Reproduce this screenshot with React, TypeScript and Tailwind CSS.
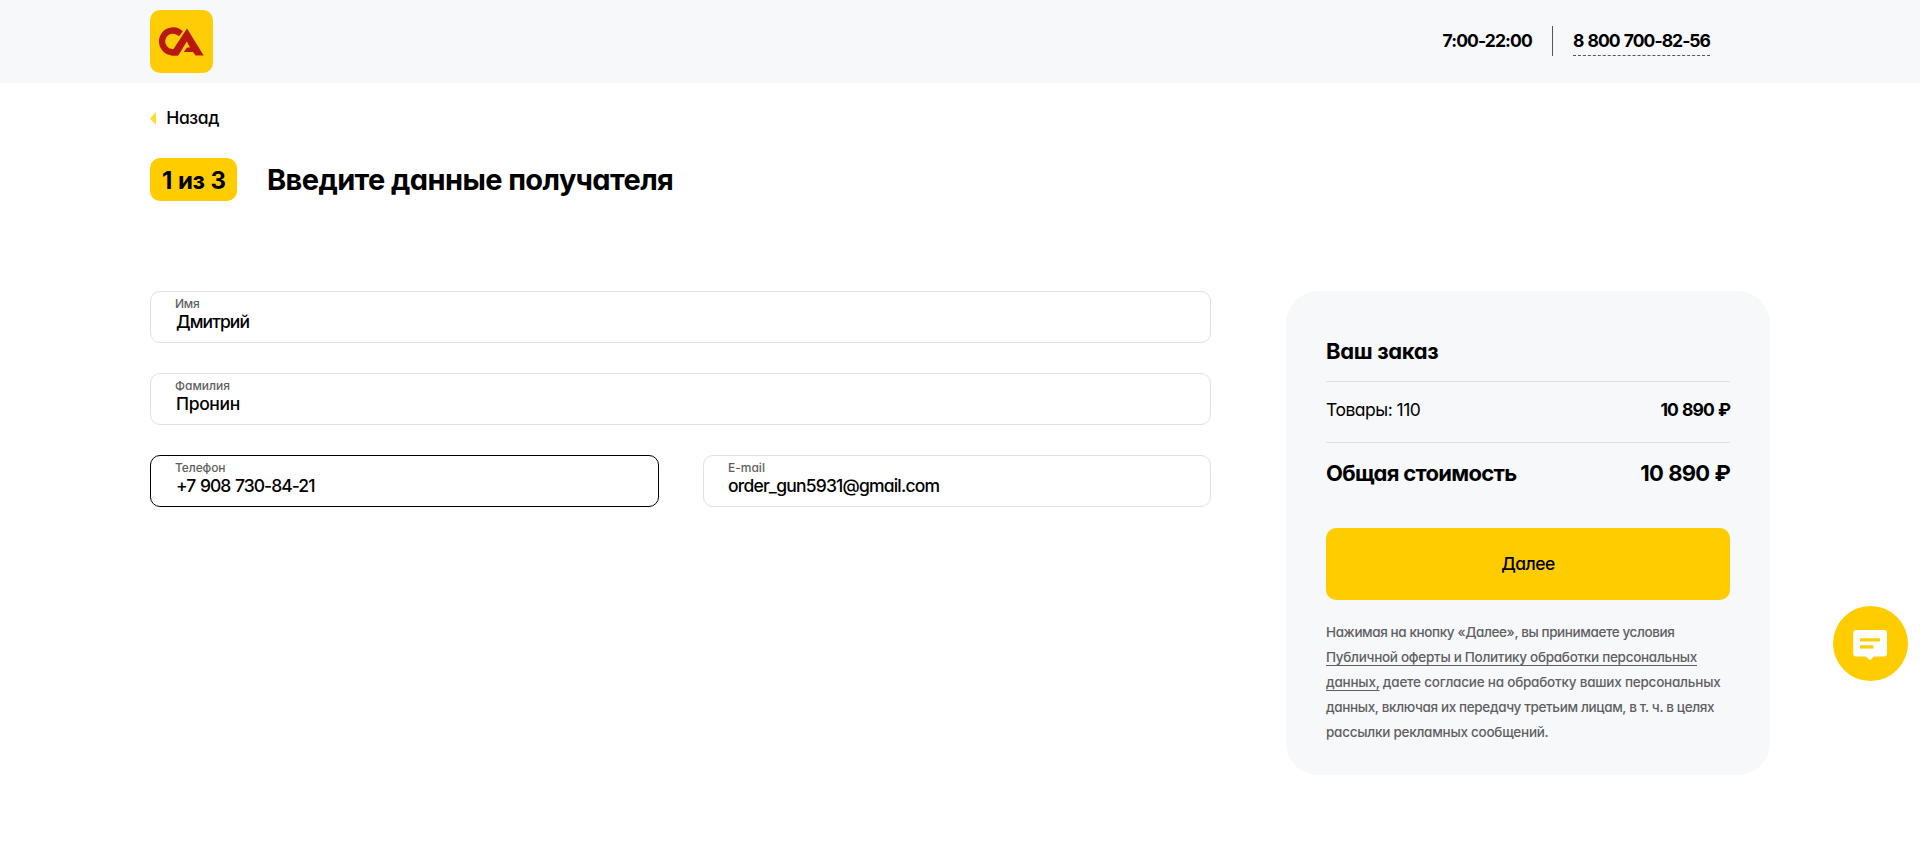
type FieldProps = {
  label: string;
  value: string;
  active?: boolean;
  className?: string;
  labelClass?: string;
  valueClass?: string;
};

function Field({ label, value, active = false, className = "", labelClass = "", valueClass = "" }: FieldProps) {
  return (
    <div className={`h-[52px] rounded-[10px] border pt-[5px] pl-6 ${active ? "border-black" : "border-[#e1e1e3]"} ${className}`}>
      <div className={`text-[12px] leading-[14px] font-medium text-[#5f5f62] ${labelClass}`}>{label}</div>
      <div className={`mt-px text-[17.5px] leading-5 font-medium ${valueClass}`}>{value}</div>
    </div>
  );
}

function Logo() {
  return (
    <svg viewBox="0 0 63 63" className="mt-2.5 size-[63px] rounded-[10px] bg-[#ffcc05]" fill="none">
      <path d="M31.2 24.2 A10.9 10.9 0 1 0 23 42.3 H27.5" stroke="#b9180f" strokeWidth="6.3" />
      <path d="M36.6 17.4 L26.5 33.5" stroke="#ffcc05" strokeWidth="2.6" />
      <path
        d="M37 18.5 L53.7 45.4 H45.6 L43 42 H33.8 L37 37.6 H40 L36.8 31.6 L28.3 45.4 H21 L21.5 42 Z"
        fill="#b9180f"
      />
    </svg>
  );
}

export default function App() {
  return (
    <div className="min-h-[847px] bg-white text-black [font-family:Inter,'Noto_Sans',sans-serif] [font-feature-settings:'cv11']">
      <header className="h-[83px] bg-[#f7f8fa]">
        <div className="mx-auto flex w-[1620px] items-start justify-between pr-[60px]">
          <Logo />
          <div className="mt-[26px] flex text-[17.5px] leading-[29px] font-bold">
            <span className="tracking-[-0.9px]">7:00-22:00</span>
            <i className="mx-[20px] h-[30px] w-px bg-[#55575a]" />
            <a className="h-[30px] border-b border-dashed border-[#55575a] tracking-[-0.96px] [word-spacing:1px]">8 800 700-82-56</a>
          </div>
        </div>
      </header>

      <main className="mx-auto w-[1620px] pt-[25px]">
        <a className="flex items-center text-[17.5px] leading-5 font-medium tracking-[-0.4px]">
          <svg viewBox="0 0 6 13" className="mr-[10.3px] h-[13px] w-1.5">
            <path d="M6 0 V13 L0 6.5 Z" fill="#ffdd2d" />
          </svg>
          Назад
        </a>

        <div className="mt-[30px] flex h-[43px] items-center font-bold">
          <span className="h-[43px] w-[87px] rounded-[10px] bg-[#ffcc00] pt-px pl-3 text-[24px] leading-[44px] tracking-[-0.5px] whitespace-nowrap [word-spacing:1px]">
            1 из 3
          </span>
          <h1 className="ml-[30px] text-[29px] leading-[43px] tracking-[-0.6px]">Введите данные получателя</h1>
        </div>

        <div className="mt-[90px] flex items-start justify-between">
          <form className="w-[1061px] space-y-[30px]">
            <Field label="Имя" value="Дмитрий" labelClass="tracking-[-0.3px]" valueClass="tracking-[-0.9px] pl-px" />
            <Field label="Фамилия" value="Пронин" valueClass="tracking-[-0.35px] pl-px" />
            <div className="flex justify-between">
              <Field
                label="Телефон"
                value="+7 908 730-84-21"
                active
                className="w-[509px]"
                labelClass="tracking-[-0.1px]"
                valueClass="tracking-[-0.98px] [word-spacing:1px] pl-px"
              />
              <Field
                label="E-mail"
                value="order_gun5931@gmail.com"
                className="w-[508px]"
                valueClass="tracking-[-0.8px]"
              />
            </div>
          </form>

          <aside className="h-[484px] w-[484px] rounded-[32px] bg-[#f7f8fa] px-10 pt-[46px]">
            <h2 className="border-b border-[#e0e1e3] pb-4 text-[22px] leading-7 font-bold tracking-[-0.35px]">Ваш заказ</h2>
            <div className="flex justify-between border-b border-[#e0e1e3] pt-4 pb-5 text-[17.5px] leading-6">
              <span className="tracking-[-0.5px]">Товары: 110</span>
              <b className="tracking-[-0.95px] [word-spacing:1px]">10 890 ₽</b>
            </div>
            <div className="flex justify-between pt-4 text-[22px] leading-7 font-bold">
              <span className="tracking-[-0.7px]">Общая стоимость</span>
              <span className="tracking-[-0.85px] [word-spacing:1px]">10 890 ₽</span>
            </div>
            <button className="mt-[41px] block h-[72px] w-full rounded-[10px] bg-[#ffcc00] text-[17.5px] font-medium tracking-[-0.55px]">
              Далее
            </button>
            <p className="mt-5 text-[13.5px] leading-[25px] font-medium whitespace-nowrap text-[#5f5f62] [text-decoration-skip-ink:none]">
              <span className="tracking-[-0.4px]">Нажимая на кнопку «Далее», вы принимаете условия</span>
              <br />
              <a className="tracking-[-0.29px] underline decoration-1 underline-offset-3">
                Публичной оферты и Политику обработки персональных
              </a>
              <br />
              <span className="tracking-[-0.22px]">
                <a className="underline decoration-1 underline-offset-3">данных,</a> даете согласие на обработку ваших персональных
              </span>
              <br />
              <span className="tracking-[-0.36px]">данных, включая их передачу третьим лицам, в т. ч. в целях</span>
              <br />
              <span className="tracking-[-0.25px]">рассылки рекламных сообщений.</span>
            </p>
          </aside>
        </div>
      </main>

      <button className="fixed top-[606px] right-3 size-[75px] rounded-full bg-[#ffcc00]">
        <svg viewBox="0 0 75 75" className="size-full">
          <path
            d="M23.2 24 H51 a3 3 0 0 1 3 3 V47.6 a3 3 0 0 1 -3 3 H41 L37.8 53.4 Q37 54 36.2 53.4 L33 50.6 H23.2 a3 3 0 0 1 -3 -3 V27 a3 3 0 0 1 3 -3 Z"
            fill="#fff"
          />
          <path d="M27 32.3 H47 V35.5 H27 Z M27 39.2 H40.3 V42.4 H27 Z" fill="#ffcc00" />
        </svg>
      </button>
    </div>
  );
}
